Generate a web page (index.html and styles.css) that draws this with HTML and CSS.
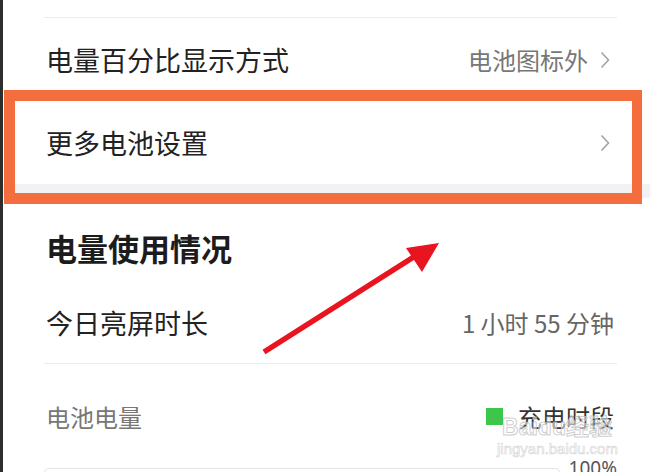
FILE: index.html
```html
<!DOCTYPE html>
<html lang="zh-CN">
<head>
<meta charset="utf-8">
<title>电池设置</title>
<link rel="stylesheet" href="styles.css">
</head>
<body>
<div class="screen">
  <div class="strip"></div>
  <main class="content">
    <div class="list">
      <div class="top-row"></div>
      <div class="row">
        <span class="label">电量百分比显示方式</span>
        <span class="value">电池图标外</span>
        <svg class="chev" viewBox="0 0 10 18" width="10" height="18"><path d="M1.5 1.5 L8.5 9 L1.5 16.5" fill="none" stroke="#a3a3a3" stroke-width="1.6"/></svg>
      </div>
      <div class="row">
        <span class="label">更多电池设置</span>
        <svg class="chev" viewBox="0 0 10 18" width="10" height="18"><path d="M1.5 1.5 L8.5 9 L1.5 16.5" fill="none" stroke="#a3a3a3" stroke-width="1.6"/></svg>
      </div>
    </div>
    <div class="gap"></div>
    <div class="list">
      <h2 class="heading">电量使用情况</h2>
      <div class="row row-line">
        <span class="label">今日亮屏时长</span>
        <span class="value dark">1 小时 55 分钟</span>
      </div>
      <div class="battery-head">
        <span class="sub">电池电量</span>
        <span class="legend"><span class="swatch"></span><span class="legend-text">充电时段</span></span>
      </div>
      <div class="chart-row">
        <div class="chart"></div>
        <span class="pct">100%</span>
      </div>
    </div>
  </main>
  <div class="highlight"></div>
  <svg class="arrow" viewBox="0 0 650 472" width="650" height="472">
    <line x1="264" y1="352" x2="420" y2="253" stroke="#e8141f" stroke-width="5.5"/>
    <polygon points="439,243 406,248 422,272" fill="#e8141f"/>
  </svg>
  <div class="watermark">
    <div class="wm-logo">Baidu经验</div>
    <div class="wm-url">jingyan.baidu.com</div>
  </div>
</div>
</body>
</html>
```
FILE: styles.css
```css
* { box-sizing: border-box; }
html, body { margin: 0; padding: 0; }
body {
  background: #fff;
  font-family: "Noto Sans CJK SC", "Noto Sans", sans-serif;
  color: #222;
}
.screen {
  position: relative;
  width: 650px;
  height: 472px;
  overflow: hidden;
  display: flex;
}
.strip {
  width: 3px;
  flex: none;
  background: #2e2e2e;
}
.content {
  flex: 1;
  display: flex;
  flex-direction: column;
}
.content > *,
.list > * {
  flex: none;
}
.list {
  margin: 0 33px 0 41px;
  display: flex;
  flex-direction: column;
}
.top-row {
  height: 18px;
  border-bottom: 1px solid #ececec;
}
.row {
  height: 83px;
  display: flex;
  align-items: center;
  padding: 0 3px 0 2px;
}
.label {
  font-size: 27px;
  line-height: 34px;
  color: #222;
  flex: 1;
}
.value {
  font-size: 24px;
  line-height: 30px;
  color: #777;
}
.value.dark { color: #666; }
.chev {
  margin-left: 12px;
  margin-right: 4px;
  flex: none;
}
.gap {
  height: 14px;
  background: #f2f2f4;
}
.heading {
  margin: 0;
  padding: 30px 2px 15px;
  font-size: 31px;
  line-height: 40px;
  font-weight: 700;
  color: #1c1c1c;
}
.row-line {
  height: 81px;
  border-bottom: 1px solid #ececec;
}
.battery-head {
  display: flex;
  align-items: center;
  justify-content: space-between;
  padding: 35px 3px 0 2px;
  height: 70px;
}
.sub {
  font-size: 24px;
  line-height: 34px;
  color: #777;
}
.legend {
  display: flex;
  align-items: center;
  gap: 15px;
}
.swatch {
  width: 17px;
  height: 17px;
  background: #3ec64b;
}
.legend-text {
  font-size: 24px;
  line-height: 34px;
  color: #333;
}
.chart-row {
  margin-top: 24px;
  display: flex;
  align-items: flex-start;
  justify-content: space-between;
}
.chart {
  margin-top: 10px;
  width: 516px;
  height: 100px;
  border: 1px solid #e6e6e6;
  border-radius: 4px;
}
.pct {
  font-family: "Noto Sans", "Noto Sans CJK SC", sans-serif;
  font-size: 19px;
  line-height: 20px;
  color: #555;
}
.highlight {
  position: absolute;
  left: 4px;
  top: 90px;
  width: 638px;
  height: 114px;
  border: 11px solid #f46d3c;
  border-right-width: 10px;
}
.arrow {
  position: absolute;
  left: 0;
  top: 0;
  pointer-events: none;
}
.watermark {
  position: absolute;
  left: 497px;
  top: 414px;
  width: 120px;
  text-align: center;
  font-family: "Liberation Sans", "Noto Sans CJK SC", sans-serif;
  color: rgba(255, 255, 255, 0.55);
  -webkit-text-stroke: 1px rgba(190, 190, 190, 0.75);
}
.wm-logo {
  font-size: 23px;
  line-height: 26px;
  font-weight: 700;
  letter-spacing: 0;
}
.wm-url {
  font-size: 15px;
  line-height: 18px;
  -webkit-text-stroke: 0.6px rgba(200, 200, 200, 0.8);
}
```
